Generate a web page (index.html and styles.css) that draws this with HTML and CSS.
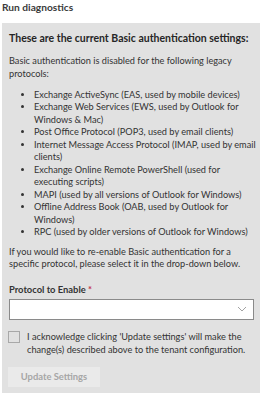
FILE: index.html
```html
<!DOCTYPE html>
<html lang="en">
<head>
    <meta charset="UTF-8">
    <meta name="viewport" content="width=device-width, initial-scale=1.0">
    <title>Run diagnostics</title>
    <link rel="stylesheet" href="styles.css">
</head>
<body>
    <h1 class="title">Run diagnostics</h1>

    <div class="panel">
        <h2 class="panel__heading">These are the current Basic authentication settings:</h2>
        <p class="panel__text intro">Basic authentication is disabled for the following legacy protocols:</p>
        <ul class="protocols">
            <li>Exchange ActiveSync (EAS, used by mobile devices)</li>
            <li>Exchange Web Services (EWS, used by Outlook for Windows &amp; Mac)</li>
            <li>Post Office Protocol (POP3, used by email clients)</li>
            <li>Internet Message Access Protocol (IMAP, used by email clients)</li>
            <li>Exchange Online Remote PowerShell (used for executing scripts)</li>
            <li>MAPI (used by all versions of Outlook for Windows)</li>
            <li>Offline Address Book (OAB, used by Outlook for Windows)</li>
            <li>RPC (used by older versions of Outlook for Windows)</li>
        </ul>
        <p class="panel__text">If you would like to re-enable Basic authentication for a specific protocol, please select it in the drop-down below.</p>

        <label class="field-label">Protocol to Enable <span class="required">*</span></label>
        <div class="dropdown">
            <svg class="dropdown__chevron" width="10" height="6" viewBox="0 0 10 6">
                <path d="M1 1 L5 5 L9 1" fill="none" stroke="#999" stroke-width="0.9"/>
            </svg>
        </div>

        <div class="ack">
            <span class="ack__box"></span>
            <span class="ack__text">I acknowledge clicking 'Update settings' will make the change(s) described above to the tenant configuration.</span>
        </div>

        <button class="update-btn" disabled>Update Settings</button>
    </div>
</body>
</html>
```

FILE: styles.css
```css
body {
    margin: 0;
    background: #ffffff;
    color: #333333;
    font-family: Lato, sans-serif;
    font-size: 9.2px;
}

.title {
    margin: 0;
    padding: 0 0 0 2px;
    height: 23px;
    line-height: 15px;
    font-size: 10.2px;
    font-weight: 700;
    color: #3b3b3b;
}

.panel {
    margin: 0 3px 0 2px;
    background: #e1e1e1;
    padding: 8px 3px 6px 7px;
}

.panel__heading {
    margin: 0 0 10px 0;
    line-height: 14px;
    font-size: 10.5px;
    font-weight: 700;
    color: #262626;
}

.panel__text {
    margin: 0;
    line-height: 12.5px;
}

.intro {
    margin-bottom: 9px;
}

.protocols {
    margin: 0 0 7.5px 0;
    padding-left: 25px;
    line-height: 12.45px;
}

.field-label {
    display: block;
    margin-top: 13px;
    line-height: 12px;
    font-weight: 700;
    font-size: 9.4px;
    color: #333;
}

.required {
    color: #c4314b;
}

.dropdown {
    margin: 3px 3px 0 0;
    height: 19px;
    background: #ffffff;
    border: 1px solid #8a8a8a;
    display: flex;
    align-items: center;
    justify-content: flex-end;
    padding-right: 6px;
}

.ack {
    display: flex;
    gap: 7px;
    margin: 10px 0 0 -1px;
    line-height: 13.5px;
}

.ack__box {
    flex: none;
    margin-top: 1px;
    width: 10px;
    height: 10px;
    border: 1px solid #a8a8a8;
}

.update-btn {
    display: block;
    margin: 10px 0 0 -1px;
    width: 92px;
    height: 20px;
    border: none;
    background: #eaeaea;
    color: #a6a6a6;
    font-family: Lato, sans-serif;
    font-size: 9.4px;
    font-weight: 700;
}
```
